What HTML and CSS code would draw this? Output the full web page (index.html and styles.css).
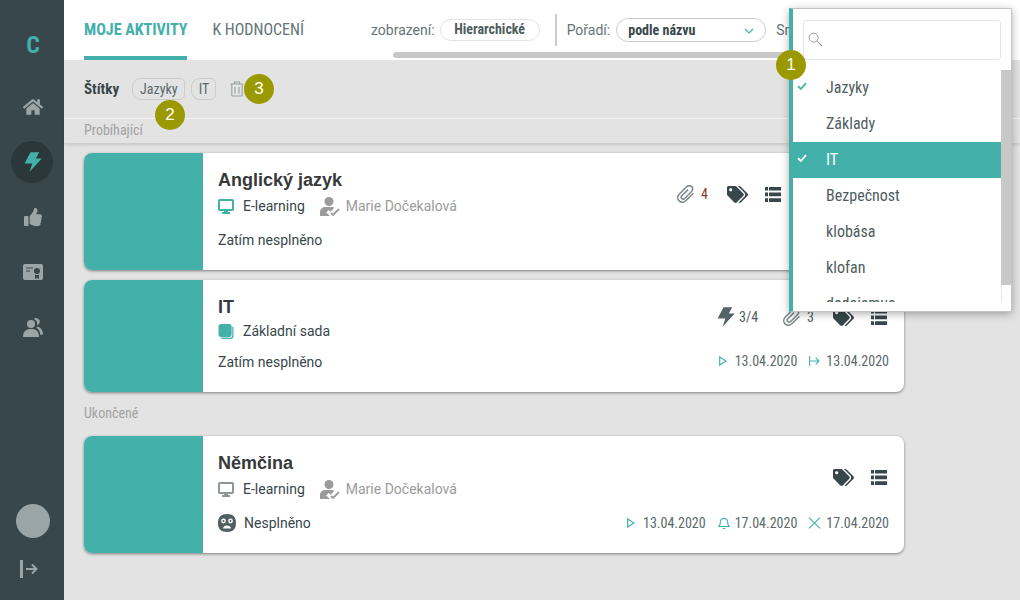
FILE: index.html
```html
<!DOCTYPE html>
<html lang="cs">
<head>
<meta charset="utf-8">
<title>Moje aktivity</title>
<link rel="stylesheet" href="styles.css">
</head>
<body>
<svg class="defs" width="0" height="0" aria-hidden="true">
  <symbol id="i-home" viewBox="0 0 576 512"><path d="M280.37 148.26L96 300.11V464a16 16 0 0 0 16 16l112.06-.29a16 16 0 0 0 15.92-16V368a16 16 0 0 1 16-16h64a16 16 0 0 1 16 16v95.64a16 16 0 0 0 16 16.05L464 480a16 16 0 0 0 16-16V300L295.67 148.26a12.19 12.19 0 0 0-15.3 0zM571.6 251.47L488 182.56V44.05a12 12 0 0 0-12-12h-56a12 12 0 0 0-12 12v72.61L318.47 43a48 48 0 0 0-61 0L4.34 251.47a12 12 0 0 0-1.6 16.9l25.5 31A12 12 0 0 0 45.15 301l235.22-193.74a12.19 12.19 0 0 1 15.3 0L530.9 301a12 12 0 0 0 16.9-1.6l25.5-31a12 12 0 0 0-1.7-16.93z"/></symbol>
  <symbol id="i-bolt" viewBox="0 0 18 20"><path d="M6.5 0.3H15.2L11.8 6.6H17.8L5.6 19.8 8.3 11.4H0.6Z"/></symbol>
  <symbol id="i-thumb" viewBox="0 0 512 512"><path d="M104 224H24c-13.255 0-24 10.745-24 24v240c0 13.255 10.745 24 24 24h80c13.255 0 24-10.745 24-24V248c0-13.255-10.745-24-24-24zM384 81.452c0 42.416-25.97 66.208-33.277 94.548h101.723c33.397 0 59.397 27.746 59.553 58.098.084 17.938-7.546 37.249-19.439 49.197l-.11.11c9.836 23.337 8.237 56.037-9.308 79.469 8.681 25.895-.069 57.704-16.382 74.757 4.298 17.598 2.244 32.575-6.148 44.632C440.202 511.587 389.616 512 346.839 512l-2.845-.001c-48.287-.017-87.806-17.598-119.56-31.725-15.957-7.099-36.821-15.887-52.651-16.178-6.54-.12-11.783-5.457-11.783-11.998v-213.77c0-3.2 1.282-6.271 3.558-8.521 39.614-39.144 56.648-80.587 89.117-113.111 14.804-14.832 20.188-37.236 25.393-58.902C282.515 39.293 291.817 0 312 0c24 0 72 8 72 81.452z"/></symbol>
  <symbol id="i-cert" viewBox="0 0 20 16"><path fill-rule="evenodd" d="M2 0H18A2 2 0 0 1 20 2V14A2 2 0 0 1 18 16H2A2 2 0 0 1 0 14V2A2 2 0 0 1 2 0ZM3 3.4V4.6H10V3.4ZM3 6.4V7.6H7V6.4ZM14 4A3 3 0 1 0 14 10 3 3 0 1 0 14 4ZM12 10.5V15L14 14 16 15V10.5A4 4 0 0 1 12 10.5Z"/></symbol>
  <symbol id="i-people" viewBox="0 0 20 19"><circle cx="8" cy="6" r="4"/><path d="M0 19C0 13.5 3 11 8 11S16 13.5 16 19Z"/><path d="M10.8 1A3.6 3.6 0 1 1 14 7.2 5 5 0 0 0 10.8 1ZM14.5 8.6C17.8 9.6 20 12.6 20 16.5L17.4 17C17 14 16 11 13.4 9.8Z"/></symbol>
  <symbol id="i-logout" viewBox="0 0 18 18"><rect x="0" y="0" width="3" height="18"/><path d="M6 9H17M12 4.5L16.5 9 12 13.5" fill="none" stroke="currentColor" stroke-width="2"/></symbol>
  <symbol id="i-trash" viewBox="0 0 14 16"><path d="M4.5 2.5V1H9.5V2.5M0.5 3H13.5M1.8 3V14A1 1 0 0 0 2.8 15H11.2A1 1 0 0 0 12.2 14V3M5 6V12.5M9 6V12.5" fill="none" stroke="currentColor" stroke-width="1.1"/></symbol>
  <symbol id="i-search" viewBox="0 0 16 16"><circle cx="6" cy="6" r="4.8" fill="none" stroke="currentColor" stroke-width="1"/><path d="M9.6 9.6L15 15" fill="none" stroke="currentColor" stroke-width="1.1"/></symbol>
  <symbol id="i-chev" viewBox="0 0 10 6"><path d="M1 1L5 5 9 1" fill="none" stroke="currentColor" stroke-width="1.2"/></symbol>
  <symbol id="i-check" viewBox="0 0 10 8"><path d="M1 4.2L3.8 7 9 1.2" fill="none" stroke="currentColor" stroke-width="1.8"/></symbol>
  <symbol id="i-screen" viewBox="0 0 16 15"><path d="M1.8 1H14.2A.8.8 0 0 1 15 1.8V10.2A.8.8 0 0 1 14.2 11H1.8A.8.8 0 0 1 1 10.2V1.8A.8.8 0 0 1 1.8 1Z" fill="none" stroke="currentColor" stroke-width="2"/><rect x="6" y="11" width="4" height="2.5"/><rect x="4" y="13" width="8" height="2" rx=".6"/></symbol>
  <symbol id="i-set" viewBox="0 0 16 16"><rect x="0" y="0" width="14" height="14" rx="3"/><path d="M15.3 3V12.5A2.8 2.8 0 0 1 12.5 15.3H3" fill="none" stroke="currentColor" stroke-width="1.3"/></symbol>
  <symbol id="i-user" viewBox="0 0 20 19"><circle cx="9" cy="4.5" r="4.5"/><path d="M0 19V15C0 12 2.5 10 5 10H12C13 10 13.8 10.3 14.4 10.8L10.6 14.8 8.6 13 6.2 15.4 10 19Z"/><path d="M11 16L13 18 19 12" fill="none" stroke="currentColor" stroke-width="1.8"/></symbol>
  <symbol id="i-clip" viewBox="0 0 18 18"><path d="M16.4 8.2L8.8 15.8C6.9 17.7 3.9 17.7 2.1 15.9S.3 11.1 2.2 9.2L9.6 1.8C11 .4 13.2 .4 14.6 1.7S16 5.1 14.6 6.5L7.6 13.5C6.8 14.3 5.6 14.3 4.8 13.5S4 11.6 4.8 10.8L11 4.6" fill="none" stroke="currentColor" stroke-width="1.6"/></symbol>
  <symbol id="i-tags" viewBox="0 0 640 512"><path d="M497.941 225.941L286.059 14.059A48 48 0 0 0 252.118 0H48C21.49 0 0 21.49 0 48v204.118a48 48 0 0 0 14.059 33.941l211.882 211.882c18.744 18.745 49.136 18.746 67.882 0l204.118-204.118c18.745-18.745 18.745-49.137 0-67.882zM112 160c-26.51 0-48-21.49-48-48s21.49-48 48-48 48 21.49 48 48-21.49 48-48 48zm513.941 133.823L421.823 497.941c-18.745 18.745-49.137 18.745-67.882 0l-.36-.36L527.64 323.522c16.999-16.999 26.36-39.6 26.36-63.64s-9.362-46.641-26.36-63.64L331.397 0h48.721a48 48 0 0 1 33.941 14.059l211.882 211.882c18.745 18.745 18.745 49.137 0 67.882z"/></symbol>
  <symbol id="i-list" viewBox="0 0 16 15"><path d="M0 0H3V3.4H0ZM4 0H16V3.4H4ZM0 5.6H3V9.2H0ZM4 5.6H16V9.2H4ZM0 11.2H3V15H0ZM4 11.2H16V15H4Z"/></symbol>
  <symbol id="i-play" viewBox="0 0 8 10"><path d="M.7 .9L7 5 .7 9.1Z" fill="none" stroke="currentColor" stroke-width="1.2"/></symbol>
  <symbol id="i-goto" viewBox="0 0 11 10"><path d="M.6 0V10M.6 5H10M6.6 1.6L10 5 6.6 8.4" fill="none" stroke="currentColor" stroke-width="1.1"/></symbol>
  <symbol id="i-bell" viewBox="0 0 12 12"><path d="M.8 9.5C2.4 8.2 2.4 6.8 2.4 5A3.6 3.6 0 0 1 9.6 5C9.6 6.8 9.6 8.2 11.2 9.5ZM4.6 11.5H7.4" fill="none" stroke="currentColor" stroke-width="1.1"/></symbol>
  <symbol id="i-x" viewBox="0 0 13 12"><path d="M1 .6L12 11.4M12 .6L1 11.4" fill="none" stroke="currentColor" stroke-width="1.1"/></symbol>
  <symbol id="i-face" viewBox="0 0 18 18"><path fill-rule="evenodd" d="M9 0C15 0 18 3 18 9S15 18 9 18 0 15 0 9 3 0 9 0ZM5.5 4.6A2.4 2.4 0 1 0 5.5 9.4 2.4 2.4 0 1 0 5.5 4.6ZM12.5 4.6A2.4 2.4 0 1 0 12.5 9.4 2.4 2.4 0 1 0 12.5 4.6ZM5 14.6H13C13 12.6 11 11.4 9 11.4S5 12.6 5 14.6ZM5.5 6A1 1 0 1 1 5.5 8 1 1 0 1 1 5.5 6ZM12.5 6A1 1 0 1 1 12.5 8 1 1 0 1 1 12.5 6Z"/></symbol>
</svg>

<div class="app">
  <nav class="side">
    <div class="logo">C</div>
    <a class="nav-btn"><svg class="ico-home"><use href="#i-home"/></svg></a>
    <a class="nav-btn active"><svg class="ico-bolt"><use href="#i-bolt"/></svg></a>
    <a class="nav-btn"><svg class="ico-thumb"><use href="#i-thumb"/></svg></a>
    <a class="nav-btn"><svg class="ico-cert"><use href="#i-cert"/></svg></a>
    <a class="nav-btn"><svg class="ico-people"><use href="#i-people"/></svg></a>
    <div class="side-foot">
      <div class="avatar"></div>
      <svg class="ico-logout"><use href="#i-logout"/></svg>
    </div>
  </nav>

  <main class="main">
    <header class="top">
      <a class="tab tab-on">MOJE AKTIVITY</a>
      <a class="tab">K HODNOCENÍ</a>
      <div class="controls">
        <span class="lbl">zobrazení:</span>
        <span class="pill">Hierarchické</span>
        <span class="divider"></span>
        <span class="lbl lbl-wide">Pořadí:</span>
        <span class="select">podle názvu<svg class="ico-chev"><use href="#i-chev"/></svg></span>
        <span class="lbl">Směr:</span>
      </div>
      <div class="hscroll"></div>
    </header>

    <section class="filters">
      <strong class="f-title">Štítky</strong>
      <span class="tag">Jazyky</span>
      <span class="tag">IT</span>
      <svg class="ico-trash"><use href="#i-trash"/></svg>
    </section>

    <div class="group group-first">Probíhající</div>
    <div class="cards">
      <article class="card">
        <div class="thumb"></div>
        <div class="body">
          <div class="col-main">
            <h2 class="title">Anglický jazyk</h2>
            <div class="meta">
              <svg class="ico-type teal"><use href="#i-screen"/></svg><span>E-learning</span>
              <svg class="ico-user"><use href="#i-user"/></svg><span class="muted">Marie Dočekalová</span>
            </div>
            <div class="state">Zatím nesplněno</div>
          </div>
          <div class="col-side">
            <div class="stats stats-shift">
              <svg class="ico-clip"><use href="#i-clip"/></svg><span class="count red">4</span>
              <svg class="ico-tags"><use href="#i-tags"/></svg>
              <svg class="ico-list"><use href="#i-list"/></svg>
            </div>
          </div>
        </div>
      </article>

      <article class="card card-short">
        <div class="thumb"></div>
        <div class="body">
          <div class="col-main">
            <h2 class="title">IT</h2>
            <div class="meta">
              <svg class="ico-type teal"><use href="#i-set"/></svg><span>Základní sada</span>
            </div>
            <div class="state">Zatím nesplněno</div>
          </div>
          <div class="col-side">
            <div class="stats">
              <svg class="ico-minibolt"><use href="#i-bolt"/></svg><span class="count count-bolt">3/4</span>
              <svg class="ico-clip"><use href="#i-clip"/></svg><span class="count">3</span>
              <svg class="ico-tags"><use href="#i-tags"/></svg>
              <svg class="ico-list"><use href="#i-list"/></svg>
            </div>
            <div class="dates">
              <svg class="d-play"><use href="#i-play"/></svg><span>13.04.2020</span>
              <svg class="d-goto"><use href="#i-goto"/></svg><span>13.04.2020</span>
            </div>
          </div>
        </div>
      </article>
    </div>

    <div class="group">Ukončené</div>
    <div class="cards">
      <article class="card">
        <div class="thumb"></div>
        <div class="body">
          <div class="col-main">
            <h2 class="title">Němčina</h2>
            <div class="meta">
              <svg class="ico-type grey"><use href="#i-screen"/></svg><span>E-learning</span>
              <svg class="ico-user"><use href="#i-user"/></svg><span class="muted">Marie Dočekalová</span>
            </div>
            <div class="state"><svg class="ico-face"><use href="#i-face"/></svg>Nesplněno</div>
          </div>
          <div class="col-side">
            <div class="stats">
              <svg class="ico-tags"><use href="#i-tags"/></svg>
              <svg class="ico-list"><use href="#i-list"/></svg>
            </div>
            <div class="dates">
              <svg class="d-play"><use href="#i-play"/></svg><span>13.04.2020</span>
              <svg class="d-bell"><use href="#i-bell"/></svg><span>17.04.2020</span>
              <svg class="d-x"><use href="#i-x"/></svg><span>17.04.2020</span>
            </div>
          </div>
        </div>
      </article>
    </div>
  </main>

  <aside class="drop">
    <div class="search"><svg class="ico-search"><use href="#i-search"/></svg></div>
    <div class="list-wrap">
      <ul class="opts">
        <li class="opt picked"><svg class="ico-check"><use href="#i-check"/></svg>Jazyky</li>
        <li class="opt">Základy</li>
        <li class="opt picked on"><svg class="ico-check"><use href="#i-check"/></svg>IT</li>
        <li class="opt">Bezpečnost</li>
        <li class="opt">klobása</li>
        <li class="opt">klofan</li>
        <li class="opt">dadaismus</li>
      </ul>
      <div class="vscroll"><div class="vthumb"></div></div>
    </div>
  </aside>

  <span class="mark mark-1">1</span>
  <span class="mark mark-2">2</span>
  <span class="mark mark-3">3</span>
</div>
</body>
</html>
```

FILE: styles.css
```css
* { box-sizing: border-box; }
html, body { margin: 0; height: 100%; }
body { font-family: Roboto, "Liberation Sans", sans-serif; color: #37474b; background: #e3e3e3; overflow: hidden; }
.defs { position: absolute; }
svg { display: block; fill: currentColor; flex: none; }
.app { position: relative; display: flex; width: 1020px; height: 600px; overflow: hidden; }

.side { width: 64px; flex: none; background: #37474b; display: flex; flex-direction: column; align-items: center; color: #9aa5a7; }
.logo { margin: 29px 0 0 2px; height: 32px; font: 700 24px/32px Roboto, sans-serif; font-stretch: 75%; color: #43b0aa; }
.nav-btn { width: 42px; height: 42px; margin-top: 13px; padding-left: 2px; display: flex; align-items: center; justify-content: center; border-radius: 50%; }
.logo + .nav-btn { margin-top: 25px; }
.nav-btn.active { background: #2b383b; color: #43b0aa; }
.ico-home { width: 20px; height: 18px; }
.ico-bolt { width: 18px; height: 20px; }
.ico-thumb { width: 18px; height: 18px; }
.ico-cert { width: 20px; height: 16px; }
.ico-people { width: 20px; height: 19px; }
.side-foot { margin-top: auto; padding-bottom: 22px; display: flex; flex-direction: column; align-items: center; gap: 22px; }
.avatar { width: 34px; height: 34px; border-radius: 50%; background: #9aa5a7; margin-left: 2px; }
.ico-logout { width: 18px; height: 18px; margin-right: 6px; }

.main { flex: 1; min-width: 0; }
.top { position: relative; height: 60px; background: #fff; padding-left: 20px; display: flex; align-items: flex-start; }
.tab { height: 60px; padding-top: 20px; font: 400 16px/20px Roboto, sans-serif; font-stretch: 75%; color: #667477; margin-right: 25px; }
.tab-on { font-weight: 700; color: #43b0aa; border-bottom: 4px solid #43b0aa; }
.controls { position: absolute; left: 307px; top: 14px; height: 32px; display: flex; align-items: center; white-space: nowrap; }
.lbl { font-size: 14px; color: #667477; margin-right: 5px; }
.lbl-wide { margin-right: 6px; }
.pill { width: 100px; height: 22px; border: 1px solid #e4e4e4; border-radius: 11px; text-align: center; font: 700 14px/19px Roboto, sans-serif; font-stretch: 75%; color: #4f5d60; }
.divider { width: 2px; height: 32px; background: #ccc; margin: 0 10px 0 15px; }
.select { position: relative; width: 150px; height: 24px; border: 1px solid #ccc; border-radius: 12px; padding-left: 11px; font: 700 14px/23px Roboto, sans-serif; font-stretch: 75%; color: #37474b; margin-right: 10px; }
.ico-chev { position: absolute; right: 11px; top: 9px; width: 10px; height: 6px; color: #43b0aa; }
.hscroll { position: absolute; left: 329px; top: 52px; width: 420px; height: 6px; border-radius: 3px; background: #c8c8c8; }

.filters { height: 59px; padding-left: 20px; display: flex; align-items: center; border-bottom: 1px solid #f4f4f4; }
.f-title { font: 700 15px/20px Roboto, sans-serif; font-stretch: 75%; color: #37474b; margin-right: 13px; }
.tag { height: 22px; padding: 0 6px 0 7px; border: 1px solid #ccc; border-radius: 9px 5px 5px 9px; font: 400 14px/20px Roboto, sans-serif; font-stretch: 75%; color: #5c696c; margin-right: 6px; }
.ico-trash { width: 14px; height: 16px; color: #9aa1a3; margin-left: 8px; }

.group { height: 24px; padding-left: 20px; font: 400 14px/22px Roboto, sans-serif; font-stretch: 75%; color: #a2a2a2; }
.group-first { margin-bottom: 10px; box-shadow: 0 2px 3px rgba(0,0,0,.12); }
.cards { padding: 0 20px; display: flex; flex-direction: column; gap: 10px; width: 860px; }
.cards + .group { margin-top: 10px; height: 34px; }
.card { height: 117px; display: flex; background: #fff; border-radius: 8px; overflow: hidden; box-shadow: 0 1px 3px rgba(0,0,0,.45); }
.card-short { height: 112px; }
.thumb { width: 119px; flex: none; background: #43b0aa; }
.body { flex: 1; padding: 0 15px; display: flex; justify-content: space-between; }
.title { margin: 16px 0 0; font: 700 18px/22px "Liberation Sans", Arial, sans-serif; color: #37393b; }
.meta { margin-top: 5px; height: 20px; display: flex; align-items: center; font-size: 14px; color: #37474b; }
.card-short .meta { margin-top: 3px; }
.ico-type { width: 16px; height: 15px; margin-right: 9px; }
.teal { color: #43b0aa; }
.grey { color: #8e9698; }
.ico-user { width: 20px; height: 19px; margin: 0 6px 0 15px; color: #9b9b9b; }
.muted { color: #9b9b9b; }
.state { margin-top: 14px; display: flex; align-items: center; gap: 8px; font-size: 14px; line-height: 20px; color: #37474b; }
.card-short .state { margin-top: 11px; }
.ico-face { width: 18px; height: 18px; color: #515f62; }
.col-side { display: flex; flex-direction: column; align-items: flex-end; }
.stats { margin-top: 32px; margin-right: 2px; height: 18px; display: flex; align-items: center; }
.card-short .stats { margin-top: 28px; }
.stats-shift { margin-right: 108px; }
.ico-clip { width: 18px; height: 18px; color: #7e8a8c; }
.count { font: 400 14px/18px Roboto, sans-serif; font-stretch: 75%; color: #4f5d60; margin-left: 6px; margin-right: 19px; }
.count-bolt { margin-left: 4px; margin-right: 25px; }
.red { color: #8a3a2c; }
.ico-minibolt { width: 18px; height: 20px; color: #566366; }
.ico-tags { width: 21px; height: 17px; color: #37474b; }
.ico-list { width: 16px; height: 15px; margin-left: 17px; color: #37474b; }
.dates { margin-top: 28px; display: flex; align-items: center; font: 400 14px/18px Roboto, sans-serif; font-stretch: 75%; color: #5c696c; }
.card-short .dates { margin-top: 26px; }
.dates svg { color: #43b0aa; }
.d-play { width: 8px; height: 10px; margin-right: 8px; }
.d-goto { width: 11px; height: 10px; margin: 0 6px 0 12px; }
.d-bell { width: 12px; height: 12px; margin: 0 5px 0 12px; }
.d-x { width: 13px; height: 12px; margin: 0 5px 0 11px; }

.drop { position: absolute; left: 789px; top: 8px; width: 223px; height: 304px; background: #fff; border: 1px solid #c4c4c4; border-left: 4px solid #43b0aa; box-shadow: 0 2px 8px rgba(0,0,0,.3); }
.search { margin: 11px 10px 10px 10px; height: 40px; border: 1px solid #e4e4e4; border-radius: 3px; padding: 11px 0 0 4px; }
.ico-search { width: 15px; height: 15px; color: #8e9698; }
.list-wrap { position: relative; height: 232px; overflow: hidden; }
.opts { margin: 0; padding: 0; list-style: none; height: 232px; overflow: hidden; margin-right: 10px; }
.opt { position: relative; height: 36px; padding-left: 33px; font: 400 16px/36px Roboto, sans-serif; font-stretch: 75%; color: #4f5d60; }
.opt.on { background: #43b0aa; color: #fff; }
.ico-check { position: absolute; left: 4px; top: 12px; width: 10px; height: 8px; color: #43b0aa; }
.on .ico-check { color: #fff; }
.vscroll { position: absolute; right: 0; top: 0; bottom: 0; width: 10px; background: #fff; border-left: 1px solid #e4e4e4; }
.vthumb { height: 215px; margin-left: -1px; background: #c8c8c8; }

.mark { position: absolute; width: 30px; height: 30px; border-radius: 50%; background: #9a9a00; color: #fff; font: 400 17px/30px "Liberation Sans", Arial, sans-serif; text-align: center; }
.mark-1 { left: 776px; top: 50px; }
.mark-2 { left: 155px; top: 100px; }
.mark-3 { left: 244px; top: 74px; }
```
